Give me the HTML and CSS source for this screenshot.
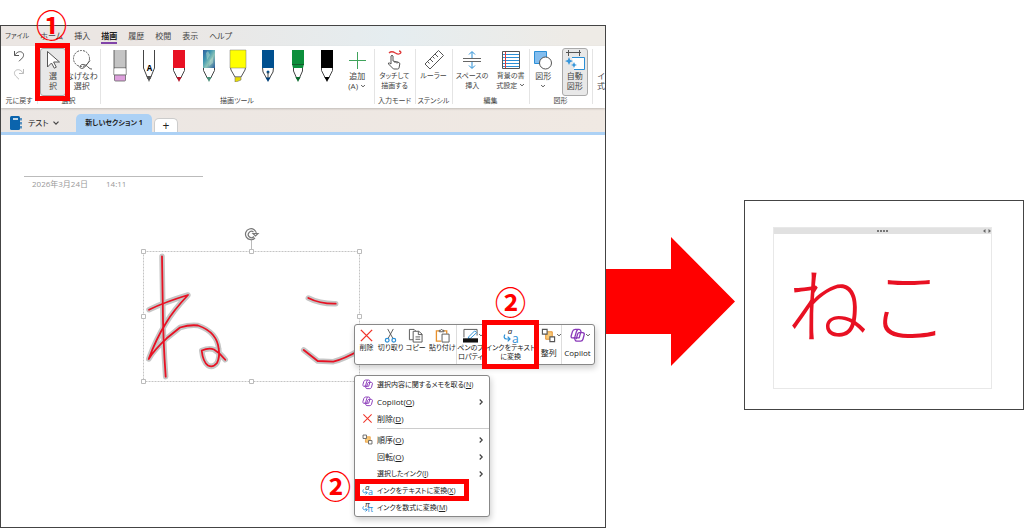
FILE: index.html
```html
<!DOCTYPE html>
<html lang="ja">
<head>
<meta charset="utf-8">
<meta name="viewport" content="width=device-width, initial-scale=1">
<title>インクをテキストに変換</title>
<link rel="stylesheet" href="styles.css">
</head>
<body>
<svg class="defs" aria-hidden="true">
  <defs>
    <linearGradient id="galaxy" x1="0" y1="0" x2="1" y2="1">
      <stop offset="0" stop-color="#2f5f9e"/><stop offset=".35" stop-color="#3f97b0"/><stop offset=".6" stop-color="#8cc4b8"/><stop offset="1" stop-color="#2c5f9c"/>
    </linearGradient>
    <symbol id="copilot" viewBox="0 0 16 16">
      <g fill="none" stroke="#8a3ab9" stroke-width="1.4" stroke-linejoin="round">
        <path d="M5.500 1.500h4.200c1 0 1.400.6 1.700 1.500l.6 2h1.500c1.300 0 2 .9 1.600 2.200l-1.200 4.500c-.4 1.400-1.100 2.300-2.500 2.300H7.200c-1 0-1.500-.6-1.800-1.500l-.6-2H2.900c-1.300 0-2-.9-1.600-2.200l1.300-4.500C3 2.400 4 1.500 5.500 1.500z"/>
        <path d="M8.300 1.700c-.8.500-1.200 1.300-1.500 2.300L5.300 9.200c-.3.900-.8 1.300-1.600 1.300M12 5H9.800c-.9 0-1.300.5-1.600 1.300L6.600 11.900M11.200 5.500 9.800 10.500H4.800"/>
      </g>
    </symbol>
    <symbol id="cross" viewBox="0 0 16 16"><path d="M2 2l12 12M14 2 2 14" fill="none" stroke="#f0352b" stroke-width="1.500"/></symbol>
    <symbol id="order" viewBox="0 0 16 16">
      <path d="M5 4h7v8H5z" fill="#f8c978" stroke="#e8912d"/>
      <path d="M1.500 1.500h5v5h-5zM9.500 9.500h5v5h-5z" fill="#fff" stroke="#555" stroke-width="1.200"/>
    </symbol>
    <symbol id="chev" viewBox="0 0 8 8"><path d="M1.500 2.700 4 5.200l2.500-2.500" fill="none" stroke="#444" stroke-width="1.200"/></symbol>
    <symbol id="arrow-turn" viewBox="0 0 8 8"><path d="M2 .5C.6 2.500 1 5 3.500 5H7M4.700 2.700 7 5 4.700 7.300" fill="none" stroke="#2b8fd6" stroke-width="1.200"/></symbol>
  </defs>
</svg>
<main class="page">
  <section class="window" aria-label="OneNote">
    <nav class="menubar">
      <a href="#" class="kana">ファイル</a><a href="#">ホーム</a><a href="#">挿入</a><a href="#" class="active">描画</a><a href="#">履歴</a><a href="#">校閲</a><a href="#">表示</a><a href="#">ヘルプ</a>
    </nav>
    <div class="ribbon">
      <div class="group">
        <div class="tools undo">
          <button aria-label="元に戻す"><svg viewBox="0 0 12 12"><path d="M1.500 1v4.500H6M1.700 5.300C3.500 2.500 6 1 8.500 2c2.500 1.200 2.700 4 .8 6L6 11.300" fill="none" stroke="#555"/></svg></button>
          <button aria-label="やり直し"><svg viewBox="0 0 12 12"><path d="M10.500 1v4.500H6M10.300 5.300C8.500 2.500 6 1 3.500 2c-2.500 1.200-2.700 4-.8 6L6 11.300" fill="none" stroke="#bbb"/></svg></button>
        </div>
        <div class="label">元に戻す</div>
      </div>
      <div class="group">
        <div class="tools select-tools">
          <div class="marked">
            <button class="tool pressed"><svg viewBox="0 0 20 20"><path d="M4.500 1.500v15.500l4-4 2.800 5.200 2-1-2.700-5.200h5.900z" fill="#fff" stroke="#555"/></svg><span>選<br>択</span></button>
            <span class="frame frame-tool"></span><span class="badge badge-tool">①</span>
          </div>
          <button class="tool"><svg viewBox="0 0 20 20"><circle cx="9.500" cy="8.500" r="8" fill="none" stroke="#555" stroke-dasharray="2 1"/><path d="M8 16.500c1-3 5-2.500 7.500 0s3 2.500 4.500 2.500M8 16.500c-.5 3 4 2.500 6-1l4-5" fill="none" stroke="#555"/></svg><span>なげなわ<br>選択</span></button>
        </div>
        <div class="label">選択</div>
      </div>
      <div class="group">
        <div class="tools pens">
          <button class="pen" aria-label="消しゴム"><svg viewBox="0 0 18 33"><path d="M3 1h12v18H3z" fill="#c4c4c4"/><path d="M3 1v25h12V1M3 19h12" fill="none" stroke="#444" stroke-width=".8"/><path d="M3.400 19.400h11.200v6.200H3.400z" fill="#fff"/><path d="M3.500 26h11v5q0 1-1 1h-9q-1 0-1-1z" fill="#dd9fdc" stroke="#666" stroke-width=".8"/></svg></button>
          <button class="pen" aria-label="ペン A"><svg viewBox="0 0 18 33"><path d="M3.500 1v18l4.500 11h2l4.500-11V1" fill="#fff" stroke="#444"/><path d="M6.500 27h5L9 33z" fill="#555"/></svg><b>A</b></button>
          <button class="pen" aria-label="赤のペン"><svg viewBox="0 0 18 33"><path d="M3.500 18.500v3l4 8h3l4-8v-3" fill="#fff" stroke="#444"/><path d="M3 1h12v18H3z" fill="#e81123"/><path d="M6.500 28h5L9 33z" fill="#b61528"/></svg></button>
          <button class="pen" aria-label="銀河のペン"><svg viewBox="0 0 18 33"><path d="M3.500 18.500v3l4 8h3l4-8v-3" fill="#fff" stroke="#444"/><path d="M3 1h12v18H3z" fill="url(#galaxy)"/><path d="M6 4l2-2 2 4-3 5zM10 11l3-3v6l-4 3z" fill="#bfe0d2" opacity=".5"/><path d="M6.500 28h5L9 33z" fill="#4b8f7a"/></svg></button>
          <button class="pen" aria-label="黄色の蛍光ペン"><svg viewBox="0 0 18 33"><path d="M1.500 18.500 2 21l4 7h6l4-7 .5-2.500" fill="#fff" stroke="#555"/><path d="M1 1h16v18H1z" fill="#ff0" stroke="#777" stroke-width=".5"/><path d="M6 28h6v3l-5 2H6z" fill="#e8dc00" stroke="#777" stroke-width=".6"/></svg></button>
          <button class="pen" aria-label="青の万年筆"><svg viewBox="0 0 18 33"><path d="M3.500 18.500 4 23l4 7h2l4-7 .5-4.500" fill="#fff" stroke="#444"/><path d="M3 1h12v18H3z" fill="#00508f"/><circle cx="9" cy="23" r="1.500" fill="#00508f"/><path d="M9 23v7" stroke="#444"/><path d="M6.500 28.500h5L9 33z" fill="#00407a"/></svg></button>
          <button class="pen" aria-label="緑のペン"><svg viewBox="0 0 18 33"><path d="M4.500 18v4l3.500 8h2l3.500-8v-4" fill="#fff" stroke="#444"/><path d="M3 1h12v14l-1 4H4l-1-4z" fill="#0c8f3c"/><path d="M3 15.500h12" stroke="#155c2c"/><path d="M6.500 28h5L9 33z" fill="#0b6b2e"/></svg></button>
          <button class="pen" aria-label="黒のペン"><svg viewBox="0 0 18 33"><path d="M3.500 18.500v3l4 8h3l4-8v-3" fill="#fff" stroke="#444"/><path d="M3 1h12v18H3zM6.500 28h5L9 33z" fill="#000"/></svg></button>
          <button class="tool"><svg viewBox="0 0 20 20"><path d="M10.500 2v17M2 10.500h17" stroke="#3fa35b" fill="none"/></svg><span>追加<br>(A) <svg class="chev"><use href="#chev"/></svg></span></button>
        </div>
        <div class="label">描画ツール</div>
      </div>
      <div class="group">
        <div class="tools"><button class="tool kana"><svg viewBox="0 0 20 20"><path d="M5 3c4-4 7 2 10 1 3-1 2-3 0-3" fill="none" stroke="#e03a3a" stroke-width="1.300"/><path d="M7 14V6q1-1.500 2 0v5l6 1.500q1 .5.800 1.500l-.8 4q-.3 1-1.300 1H9.500L4.500 14q-.6-1.500 1-1z" fill="#fff" stroke="#555"/><path d="M11 11v2M13 11.500v2" stroke="#555"/></svg><span>タッチして<br>描画する</span></button></div>
        <div class="label">入力モード</div>
      </div>
      <div class="group">
        <div class="tools"><button class="tool kana"><svg viewBox="0 0 20 20"><path d="M1 14 14.500.5l5 5L6 19zM3.500 11.500l2 2M6 9l3 3M8.500 6.500l2 2M11 4l3 3" fill="none" stroke="#555"/></svg><span>ルーラー</span></button></div>
        <div class="label">ステンシル</div>
      </div>
      <div class="group">
        <div class="tools two">
          <button class="tool kana"><svg viewBox="0 0 20 20"><path d="M10 8V2M7 4.500l3-3 3 3M10 12v6M7 15.500l3 3 3-3" fill="none" stroke="#2b8fd6"/><path d="M1 8.500h18M1 11.500h18" stroke="#666"/></svg><span>スペースの<br>挿入</span></button>
          <button class="tool kana"><svg viewBox="0 0 20 20"><path d="M1.500 1.500h17v17h-17z" fill="#fff" stroke="#555"/><path d="M2 4.500h16M2 7.500h16M2 10.500h16M2 13.500h16M2 16.500h16" stroke="#2b8fd6"/><path d="M4.500 2v16" stroke="#e03a3a"/></svg><span>背景の書<br>式設定 <svg class="chev"><use href="#chev"/></svg></span></button>
        </div>
        <div class="label">編集</div>
      </div>
      <div class="group">
        <div class="tools two">
          <button class="tool"><svg viewBox="0 0 20 20"><path d="M1.500 1.500h12v12h-12z" fill="#83bdee" stroke="#2b8fd6"/><circle cx="12.500" cy="13" r="6" fill="#fff" stroke="#555"/></svg><span>図形<br><svg class="chev"><use href="#chev"/></svg></span></button>
          <button class="tool pressed"><svg viewBox="0 0 20 20"><path d="M1 2.500h15M3.500 0v6M14.500 0v6" stroke="#555" fill="none"/><path d="M7 7.500h12.500v12H9" fill="#fff" stroke="#2b8fd6"/><path d="M4 7l1.200 3L8 11l-2.800 1.200L4 15l-1.200-2.800L0 11l2.800-1zM9 12l1 2.200 2 .8-2 .8L9 18l-1-2.200-2-.8 2-.8z" fill="#3797dc"/></svg><span>自動<br>図形</span></button>
        </div>
        <div class="label">図形</div>
      </div>
      <div class="group cut"><div class="tools"><button class="tool"><svg viewBox="0 0 20 20"></svg><span>イ<br>式</span></button></div></div>
    </div>
    <div class="tabs">
      <button class="notebook"><svg class="book" viewBox="0 0 12 14"><rect width="10" height="14" rx="1.500" fill="#0b64ad"/><path d="M3 3h5" stroke="#fff" stroke-width="1.500"/><path d="M11 2v2.500M11 6v2.500M11 10v2.500" stroke="#0b64ad" stroke-width="1.300"/></svg>テスト<svg class="chev"><use href="#chev"/></svg></button>
      <button class="section">新しいセクション 1</button>
      <button class="add" aria-label="セクションの追加">+</button>
    </div>
    <div class="canvas">
      <div class="date"><span>2026年3月24日</span><span>14:11</span></div>
      <svg class="ink" viewBox="138 225 230 162" aria-label="ねこ">
        <path d="M143.500 251.500h216v130h-216z" fill="none" stroke="#c4c4c4" stroke-dasharray="2 1"/>
        <path d="M251.500 240v9" stroke="#bbb"/>
        <g fill="#fff" stroke="#bbb"><path d="M141.500 249.500h4v4h-4zM249.500 249.500h4v4h-4zM357.500 249.500h4v4h-4zM141.500 314.500h4v4h-4zM357.500 314.500h4v4h-4zM141.500 379.500h4v4h-4zM249.500 379.500h4v4h-4zM357.500 379.500h4v4h-4z"/></g>
        <path d="M255 238a5.500 5.500 0 1 1 1.500-4M254 236.500a3.200 3.200 0 1 1-.5-4.500M253 233.500h5l-2.500 2.500z" fill="none" stroke="#777" stroke-width="1.200"/>
        <g fill="none" stroke-linecap="round" stroke-linejoin="round">
          <g stroke="#c6c6c6" stroke-width="5.500">
            <path d="M162 256.300 162.700 300Q163 340 165.700 376.700"/>
            <path d="M149 309.700Q165 302 188 295 173 311 166 323 156 339 148.700 359 154 350 166.700 338.300L180 327.500Q190 324.500 198 325.500 208 329 213 335 218 341 218.700 349 220 357 217 363 213 368 208 365.500 203 362 201.700 350.500 209 347.500 214 349.500 220 353 225.300 359.700"/>
            <path d="M308.300 298Q320 304 335.700 303.700"/>
            <path d="M303.700 350 317.700 361 333.300 361.700Q344 359 360 350"/>
          </g>
          <g stroke="#e81123" stroke-width="1.800">
            <path d="M162 256.300 162.700 300Q163 340 165.700 376.700"/>
            <path d="M149 309.700Q165 302 188 295 173 311 166 323 156 339 148.700 359 154 350 166.700 338.300L180 327.500Q190 324.500 198 325.500 208 329 213 335 218 341 218.700 349 220 357 217 363 213 368 208 365.500 203 362 201.700 350.500 209 347.500 214 349.500 220 353 225.300 359.700"/>
            <path d="M308.300 298Q320 304 335.700 303.700"/>
            <path d="M303.700 350 317.700 361 333.300 361.700Q344 359 360 350"/>
          </g>
        </g>
      </svg>
      <div class="minibar" role="toolbar">
        <button><svg><use href="#cross"/></svg><span>削除</span></button>
        <button><svg viewBox="0 0 16 16"><path d="M5 1l5.500 10M11 1 5.500 11" stroke="#555" fill="none"/><g fill="none" stroke="#2b8fd6" stroke-width="1.300"><circle cx="4.500" cy="13" r="2"/><circle cx="11.500" cy="13" r="2"/></g></svg><span>切り取り</span></button>
        <button><svg viewBox="0 0 16 16"><path d="M5.500 12.500h-4v-11h5l2 2" fill="none" stroke="#555"/><path d="M5.500 3.500h6l3.500 3v8.500H5.500zM11 3.500v3.500h4M8 9.500h5M8 12h5" fill="#fff" stroke="#555"/></svg><span>コピー</span></button>
        <button><svg viewBox="0 0 16 16"><path d="M6.500 14h-5V3h11v3" fill="none" stroke="#e8912d" stroke-width="1.400"/><path d="M4.500 4V2.500H6q1-2.500 2 0h1.500V4zM7.500 6.500H15V15H7.500z" fill="#fff" stroke="#555"/></svg><span>貼り付け</span></button>
        <button class="ruled"><i><svg viewBox="0 0 16 16"><path d="M1 10V1.500h14V8" fill="none" stroke="#555"/><path d="M6 9.500 12.500 3l2 2L8 11H5.500z" fill="#fff" stroke="#2b8fd6"/><path d="M0 11h16v4.500H0z" fill="#111"/></svg><svg class="chev"><use href="#chev"/></svg></i><span>ペンのプ<br>ロパティ</span></button>
        <button class="marked"><i class="convert"><em>a</em><svg class="turn"><use href="#arrow-turn"/></svg><b>a</b></i><span>インクをテキスト<br>に変換</span></button>
        <button><i><svg><use href="#order"/></svg><svg class="chev"><use href="#chev"/></svg></i><span class="low">整列</span></button>
        <button class="ruled"><i><svg><use href="#copilot"/></svg><svg class="chev"><use href="#chev"/></svg></i><span class="low">Copilot</span></button>
        <span class="frame frame-bar"></span><span class="badge badge-bar">②</span>
      </div>
      <div class="context" role="menu">
        <button role="menuitem" class="kana"><svg><use href="#copilot"/></svg><span>選択内容に関するメモを取る(<u>N</u>)</span></button>
        <button role="menuitem"><svg><use href="#copilot"/></svg><span>Copilot(<u>O</u>)</span><svg class="sub"><use href="#chev"/></svg></button>
        <button role="menuitem"><svg><use href="#cross"/></svg><span>削除(<u>D</u>)</span></button>
        <hr>
        <button role="menuitem"><svg><use href="#order"/></svg><span>順序(<u>O</u>)</span><svg class="sub"><use href="#chev"/></svg></button>
        <button role="menuitem"><i></i><span>回転(<u>O</u>)</span><svg class="sub"><use href="#chev"/></svg></button>
        <button role="menuitem" class="kana"><i></i><span>選択したインク(<u>I</u>)</span><svg class="sub"><use href="#chev"/></svg></button>
        <button role="menuitem" class="marked kana"><i class="convert small"><em>a</em><svg class="turn"><use href="#arrow-turn"/></svg><b>a</b></i><span>インクをテキストに変換(<u>X</u>)</span><span class="frame frame-item"></span><span class="badge badge-item">②</span></button>
        <button role="menuitem" class="kana"><i class="convert small"><em>π</em><svg class="turn"><use href="#arrow-turn"/></svg><b>π</b></i><span>インクを数式に変換(<u>M</u>)</span></button>
      </div>
    </div>
  </section>
  <svg class="arrow" viewBox="0 0 129 129" aria-hidden="true"><path d="M0 32h65V0l64 64.500L65 129V97H0z" fill="#f00"/></svg>
  <section class="result" aria-label="変換結果">
    <div class="note">
      <div class="grip"><span></span><svg class="dots" viewBox="0 0 12 2"><path d="M0 1h2M3 1h2M6 1h2M9 1h2" stroke="#777" stroke-width="2"/></svg><svg class="ends" viewBox="0 0 8 6"><path d="M2.500 1v4L0 3zM5.500 1v4L8 3z" fill="#666"/></svg></div>
      <p>ねこ</p>
    </div>
  </section>
</main>
</body>
</html>
```

FILE: styles.css
```css
* { box-sizing: border-box; }
body {
  margin: 0;
  background: #fff;
  color: #444;
  font: 8px/10px "Open Sans", "Noto Sans CJK JP", sans-serif;
  font-feature-settings: "palt";
}
button { margin: 0; padding: 0; border: 0; background: none; color: inherit; font: inherit; font-feature-settings: inherit; }
a { color: inherit; text-decoration: none; }
svg { display: block; flex: none; }
.defs { position: absolute; width: 0; height: 0; }
.kana { font-size: 7px; }

.page {
  display: grid;
  grid-template-columns: minmax(0, 606fr) minmax(0, 138fr) minmax(0, 280fr);
  align-items: start;
  min-height: 100vh;
  padding-top: 25px;
}
.window {
  display: flex;
  flex-direction: column;
  align-self: stretch;
  border: 1px solid #444;
  background: linear-gradient(90deg, #ebe6e3, #f0e9e3);
}
.menubar {
  display: flex;
  gap: 11px;
  height: 20px;
  padding: 0 4px;
  white-space: nowrap;
  background: linear-gradient(90deg, #ebe6e3 25%, #e5edf0 65%, #eeebe6 95%);
}
.menubar a { padding-top: 5px; height: 18px; }
.menubar .active { color: #222; font-weight: 700; border-bottom: 2px solid #8143a8; }

.ribbon {
  display: grid;
  grid-template-columns: minmax(0, 36fr) minmax(0, 63fr) minmax(0, 274fr) minmax(0, 41fr) minmax(0, 37fr) minmax(0, 77fr) minmax(0, 63fr) minmax(0, 13fr);
  height: 62px;
  background: #fff;
  box-shadow: 0 1px 2px #0003;
}
.group { display: flex; flex-direction: column; position: relative; min-width: 0; }
.group + .group::before { content: ""; position: absolute; left: 0; top: 3px; bottom: 4px; width: 1px; background: #e4e4e4; }
.tools { display: flex; justify-content: center; flex: 1; padding-top: 2px; }
.label { display: flex; justify-content: center; height: 12px; font-size: 7px; white-space: nowrap; }
.tool { display: flex; flex-direction: column; align-items: center; gap: 1px; padding-top: 2px; height: 48px; white-space: nowrap; }
.tool > svg { width: 20px; height: 20px; }
.tool span { display: block; }
.chev { display: inline-block; width: 6px; height: 6px; }
.pressed { width: 26px; border: 1px solid #aaa; border-radius: 3px; background: #e8e8e8; padding-top: 1px; }
.undo { flex-direction: column; justify-content: flex-start; align-items: center; gap: 4px; }
.undo button { padding-top: 2px; }
.undo svg { width: 12px; height: 12px; }
.select-tools { justify-content: flex-start; padding-left: 3px; }
.marked { position: relative; }
.pens { display: grid; grid-template-columns: repeat(9, minmax(0, 1fr)); padding-left: 5px; padding-right: 2px; justify-items: center; align-items: start; }
.pen { position: relative; padding-top: 1px; }
.pen svg { width: 18px; height: 33px; }
.pen b { position: absolute; left: 0; right: 0; top: 15px; color: #000; }
.two { justify-content: space-around; }
.cut .tools { justify-content: flex-start; padding-left: 5px; }
.cut .tool { width: 8px; }

.tabs { display: flex; align-items: flex-end; height: 27px; border-bottom: 3px solid #acd1f5; }
.notebook { display: flex; align-items: center; gap: 3px; width: 75px; height: 18px; padding-left: 9px; color: #222; }
.book { width: 12px; height: 14px; margin-right: 3px; }
.notebook .chev { width: 8px; height: 8px; }
.section { width: 76px; height: 18px; border-radius: 5px 5px 0 0; background: #acd1f5; color: #222; font-size: 7px; font-weight: 700; white-space: nowrap; }
.add { width: 24px; height: 14px; margin-left: 2px; border: 1px solid #ccc; border-bottom: 0; border-radius: 5px 5px 0 0; background: #fff; font-size: 12px; color: #222; }

.canvas { position: relative; flex: 1; min-height: 392px; background: #fff; }
.date { display: flex; gap: 18px; width: 179px; margin: 41px 0 0 23px; padding: 2px 8px; border-top: 1px solid #bbb; color: #999; }
.ink { position: absolute; left: 137px; top: 90px; width: 230px; height: 162px; }

.minibar, .context { position: absolute; left: 353px; border: 1px solid #888; border-radius: 3px; background: #fff; box-shadow: 1px 3px 6px #0003; color: #222; }
.minibar {
  top: 189px;
  display: grid;
  grid-template-columns: 23fr 25fr 25fr 28fr 28fr 52fr 24fr 33fr;
  width: 241px;
  height: 41px;
  font-size: 7px;
}
.minibar button { display: flex; flex-direction: column; align-items: center; min-width: 0; padding-top: 3px; line-height: 9px; white-space: nowrap; }
.minibar svg { width: 15px; height: 15px; }
.minibar i { position: relative; display: block; }
.minibar i .chev { position: absolute; left: 15px; top: 4px; width: 6px; height: 6px; }
.minibar .low { padding-top: 5px; font-size: 8px; }
.ruled { box-shadow: inset 1px 0 #ddd; }
.convert { position: relative; display: block; width: 16px; height: 15px; font-style: normal; }
.convert em, .convert b { position: absolute; line-height: 8px; font-weight: 400; }
.convert em { left: 5px; top: -1px; font-size: 8px; }
.convert b { right: 0; bottom: 0; font-size: 12px; color: #2b8fd6; }
.minibar .turn, .turn { position: absolute; left: 0; bottom: 1px; width: 8px; height: 8px; }

.context { top: 240px; width: 136px; display: flex; flex-direction: column; }
.context button { display: flex; align-items: center; gap: 4px; height: 17px; padding: 0 4px 0 7px; white-space: nowrap; }
.context button > svg:first-child, .context i { flex: none; width: 11px; height: 11px; }
.context .sub { width: 8px; height: 8px; margin-left: auto; transform: rotate(-90deg); }
.context hr { width: 112px; margin: 1px 0 2px auto; border: 0; border-top: 1px solid #ccc; }
.context .small b { font-size: 9px; }
.context .small em { left: 3px; top: -2px; }
.context .turn { width: 6px; height: 6px; }
u { text-underline-offset: 1px; }

.frame { position: absolute; border: 5px solid #f00; pointer-events: none; z-index: 2; }
.badge { position: absolute; z-index: 3; color: #f00; font: 700 31px/30px "Noto Sans CJK JP", sans-serif; font-feature-settings: normal; }
.frame-tool { left: -5px; right: -4px; top: -5px; bottom: -5px; }
.badge-tool { left: -4px; top: -39px; }
.frame-bar { left: 127px; top: -5px; width: 57px; height: 49px; }
.badge-bar { left: 140px; top: -39px; }
.frame-item { left: 0; top: -3px; width: 114px; height: 22px; }
.badge-item { left: -35px; top: -12px; }

.arrow { width: calc(100% - 9px); margin-top: 212px; }
.result { margin-top: 175px; padding: 26px 31px 20px 28px; border: 1px solid #444; }
.note { border: 1px solid #e8e8e8; }
.grip { display: grid; grid-template-columns: 1fr auto 1fr; align-items: center; height: 6px; background: #e1e1e1; }
.dots { width: 12px; height: 2px; }
.ends { width: 8px; height: 6px; justify-self: end; }
.note p { margin: 0; padding: 22px 13px 42px; color: #e81123; font: 300 81px/90px "Noto Sans CJK JP", sans-serif; font-feature-settings: normal; white-space: nowrap; }
```
